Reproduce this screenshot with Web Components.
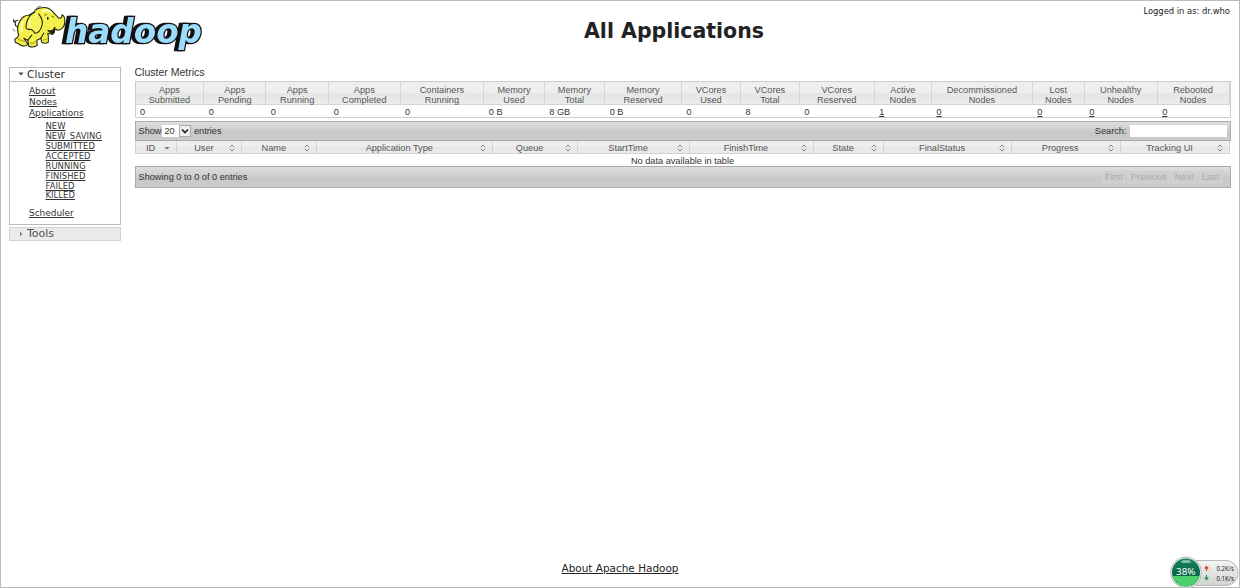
<!DOCTYPE html>
<html lang="en">
<head>
<meta charset="utf-8">
<title>All Applications</title>
<style>
html,body{margin:0;height:100%;background:#fff;overflow:hidden}
</style>
</head>
<body>
<yarn-page>
  <hadoop-logo slot="logo"></hadoop-logo>
  <span slot="title">All Applications</span>
  <span slot="user">Logged in as: dr.who</span>
  <side-nav slot="nav"></side-nav>
  <cluster-metrics slot="main">Cluster Metrics</cluster-metrics>
  <apps-table slot="main"></apps-table>
  <span slot="footer">About Apache Hadoop</span>
</yarn-page>
<net-gadget></net-gadget>
<script>
function define(name, html) {
  const t = document.createElement('template');
  t.innerHTML = html;
  customElements.define(name, class extends HTMLElement {
    constructor() {
      super();
      this.attachShadow({mode: 'open'}).append(t.content.cloneNode(true));
    }
  });
}

define('yarn-page', `
<style>
:host{display:flex;flex-direction:column;box-sizing:border-box;width:1240px;height:588px;border:1px solid #b9b9b9;font-family:"DejaVu Sans",sans-serif;color:#222;padding:0 9px 0 8px}
header{display:grid;grid-template-columns:200px 1fr 200px;height:66px;flex:none}
h1{margin:17px 0 0;font-size:20.5px;line-height:27px;text-align:center;font-weight:bold;padding-left:109px;white-space:nowrap}
.user{text-align:right;font-size:8.4px;line-height:12px;padding-top:4px}
.body{display:grid;grid-template-columns:111.500px 1096px;column-gap:14px;flex:1;align-items:start}
footer{height:28px;text-align:center;font-size:10.47px;line-height:18px;text-decoration:underline;padding-left:1px}
</style>
<header><div><slot name="logo"></slot></div><h1><slot name="title"></slot></h1><div class="user"><slot name="user"></slot></div></header>
<div class="body"><slot name="nav"></slot><main><slot name="main"></slot></main></div>
<footer><slot name="footer"></slot></footer>`);

define('hadoop-logo', `
<style>:host{display:block}svg{display:block;overflow:visible}text{filter:drop-shadow(-3px 0 0 #111)}</style>
<svg width="200" height="56" viewBox="9 1 200 56">
  <text x="65" y="43" font-family="DejaVu Sans" font-weight="bold" font-style="italic" font-size="34.5" stroke-linejoin="miter" textLength="137" lengthAdjust="spacingAndGlyphs" fill="#9bdcfc" stroke="#111" stroke-width="2.6" paint-order="stroke">hadoop</text>
  <g transform="translate(0.800 1.200)" stroke="#25250c" stroke-width="1.1" stroke-linejoin="round" stroke-linecap="round">
    <path d="M18 26Q14 26 14.500 21Q12 21 13 18.500M14 20L17 19" fill="none"/>
    <path d="M19 20Q22 14 28 14L33 11Q35 7 41 6.500Q47 5.500 51 9.500Q55 14 58 17Q62 17 61 13.500Q64 14 64 20Q64 27 58 29Q55 29 53.500 27Q55 32 51 33L47 32Q48 36 47.500 41Q44 43 41 41L40 37L36 39L36.500 44Q33 47 28 45L27 39L23 37Q25 40 27 43Q25 46 20 44L17 42Q14 42 14 38Q17 37 18 34Q15 27 19 20Z" fill="#f4f04a"/>
    <path d="M34 11Q27 14 25.500 23Q24 29 29 28Q32 28 34 32Q39 32 41 25Q43 19 38 13" fill="#f5f25a"/>
    <path d="M47 29Q52 31 54 26M40 37L43 32M27 39L31 34" fill="none"/>
    <path d="M48 30Q52 31 53.500 28L52 33Z" fill="#222"/>
    <path d="M42 10Q46 7 50 11" stroke="#fffcc0" stroke-width="2" fill="none"/>
    <path d="M22 21Q20 25 21 30M29 20Q28 24 30 25" stroke="#ffffa8" stroke-width="2.200" fill="none"/>
    <path d="M18 38Q20 40 23 40M30 42Q33 43 35 40M43 39L46 38" stroke="#c4bd25" stroke-width="1.800" fill="none"/>
    <ellipse cx="47" cy="17" rx=".8" ry="1.500" fill="#111" stroke="none"/>
    <path d="M44 14L46 13M51 15L53 16M35 8Q37 5 40 5M12 28L14 30" fill="none" stroke-width=".7"/>
  </g>
</svg>`);

define('side-nav', `
<style>
:host{display:block;color:#333}
.hd{box-sizing:border-box;height:14.5px;border:1px solid #bbb;font-size:10.7px;line-height:13px;display:flex;align-items:center;padding-left:8px;gap:3px}
.hd svg{width:6px;height:6px;flex:none}
.bd{border:1px solid #bbb;border-top:0;height:143.500px;box-sizing:border-box;padding:4.300px 0 0 19px;font-size:8.95px;line-height:11px}
ul{list-style:none;margin:0;padding:0}
li ul{padding:3px 0 6.700px 16.500px;font-size:8.4px;line-height:9.950px;letter-spacing:.08px}
a{text-decoration:underline;display:block;width:max-content}
.off{margin-top:1.500px;border-color:#d3d3d3;background:#ebebeb;color:#555;font-size:11px}
</style>
<div class="hd"><svg viewBox="0 0 6 6"><path d="M.5 1.500H5.500L3 4.500Z" fill="#444"/></svg>Cluster</div>
<div class="bd"><ul><li><a>About</a></li><li><a>Nodes</a></li><li><a>Applications</a>
<ul><li><a>NEW</a></li><li><a>NEW_SAVING</a></li><li><a>SUBMITTED</a></li><li><a>ACCEPTED</a></li><li><a>RUNNING</a></li><li><a>FINISHED</a></li><li><a>FAILED</a></li><li><a>KILLED</a></li></ul></li>
<li><a>Scheduler</a></li></ul></div>
<div class="hd off"><svg viewBox="0 0 6 6"><path d="M2 .800V5.200L4.500 3Z" fill="#777"/></svg>Tools</div>`);

const metrics = [
  ['Apps Submitted','0',69],['Apps Pending','0',62],['Apps Running','0',63],['Apps Completed','0',71.5],
  ['Containers Running','0',84],['Memory Used','0 B',60.500],['Memory Total','8 GB',60.500],['Memory Reserved','0 B',77],
  ['VCores Used','0',59],['VCores Total','8',59],['VCores Reserved','0',75],['Active Nodes','1',57.500,1],
  ['Decommissioned Nodes','0',101,1],['Lost Nodes','0',52,1],['Unhealthy Nodes','0',73,1],['Rebooted Nodes','0',72,1]];
define('cluster-metrics', `
<style>
:host{display:block;font-family:"Liberation Sans",Arial,sans-serif;color:#333;font-size:10.5px;line-height:12px;margin-top:-1px;height:55px}
.t{box-sizing:border-box;width:1096px;height:37px;margin-top:2.500px;border:1px solid #ccc;font-size:9.2px;display:grid;grid-template-columns:${metrics.map(m => m[2] + 'fr').join(' ')};grid-template-rows:23px 12px}
.h{background:linear-gradient(#eee 0 50%,#e5e5e5 50%,#ececec);border-right:1px solid #d5d5d5;border-bottom:1px solid #d5d5d5;box-sizing:border-box;text-align:center;color:#555;line-height:10px;padding-top:3px;white-space:nowrap;min-width:0}
.v{padding-left:4.500px;line-height:15px}
.l{text-decoration:underline}
</style>
<slot></slot>
<div class="t">${metrics.map(m => `<div class="h">${m[0].replace(' ', '<br>')}</div>`).join('')}${metrics.map(m => `<div class="v"><span class="${m[3] ? 'l' : ''}">${m[1]}</span></div>`).join('')}</div>`);

const cols = [['ID',42],['User',65],['Name',75],['Application Type',176],['Queue',85],['StartTime',112],['FinishTime',124],['State',70.500],['FinalStatus',127.500],['Progress',109],['Tracking UI',110]];
const sortBoth = '<svg viewBox="0 0 6 8"><path d="M.8 3.200L3 1L5.200 3.200M.8 4.900L3 7.100L5.200 4.900" fill="none" stroke="#777" stroke-width=".9"/></svg>';
const sortDown = '<svg viewBox="0 0 6 8"><path d="M.3 2.900H5.700L3 5.500Z" fill="#777"/></svg>';
define('apps-table', `
<style>
:host{display:block;width:1096px;font-family:"Liberation Sans",Arial,sans-serif;font-size:9.2px;color:#333}
.bar{box-sizing:border-box;border:1px solid #aaa;background:linear-gradient(#dedede,#c8c8c8 60%,#cbcbcb);display:flex;align-items:center;padding:0 3px}
.top{height:20px;line-height:13px}
.bot{height:22px;padding-right:7px}
.sel{display:flex;align-items:center;width:29px;height:12px;background:#fff;margin:0 2.500px 0 1px;box-sizing:border-box;padding-left:2px}
.sel i{margin-left:auto;width:10px;height:10px;border:1px solid #aaa;background:#eee;display:flex}
.sel svg{width:10px;height:10px}
.sp{flex:1}
.in{width:97px;height:12px;background:#fff;margin-left:3px}
.hr{display:grid;grid-template-columns:${cols.map(c => c[1] + 'fr').join(' ')};height:13px;line-height:12px;color:#555;border-left:1px solid #d3d3d3;box-sizing:border-box}
.c{display:flex;align-items:center;min-width:0;height:13px;box-sizing:border-box;border-right:1px solid #d3d3d3;border-bottom:1px solid #d3d3d3;background:linear-gradient(#eee 0 50%,#e6e6e6 50%,#ebebeb);padding-right:6px}
.c span{flex:1;text-align:center;margin-right:-1px;white-space:nowrap;padding-top:2px}
.c svg{width:6px;height:8px;flex:none;margin-top:1px}
.none{height:12px;line-height:14px;text-align:center}
.pg{display:flex;color:#a9a9a9;gap:1px;line-height:13px}
.pg span{padding:0 3.500px;background:#cfcfcf}
</style>
<div class="bar top">Show<span class="sel">20<i><svg viewBox="0 0 10 10"><path d="M2 3.500L5 6.500L8 3.500" fill="none" stroke="#222" stroke-width="1.700"/></svg></i></span>entries<span class="sp"></span>Search:<span class="in"></span></div>
<div class="hr">${cols.map((c, i) => `<div class="c"><span>${c[0]}</span>${i ? sortBoth : sortDown}</div>`).join('')}</div>
<div class="none">No data available in table</div>
<div class="bar bot">Showing 0 to 0 of 0 entries<span class="sp"></span><div class="pg"><span>First</span><span>Previous</span><span>Next</span><span>Last</span></div></div>`);

define('net-gadget', `
<style>
:host{position:absolute;left:1168px;top:554px;width:72px;height:34px;overflow:hidden}
svg{display:block}
</style>
<svg width="72" height="34" viewBox="1168 554 72 34" font-family="Noto Sans,sans-serif">
  <defs><linearGradient id="p" x2="0" y2="1"><stop stop-color="#f4f4f4"/><stop offset="1" stop-color="#d2d2d2"/></linearGradient>
  <linearGradient id="g" x2="0" y2="1"><stop stop-color="#168060"/><stop offset=".6" stop-color="#086747"/></linearGradient></defs>
  <rect x="1183" y="560.500" width="55" height="25" rx="12" fill="url(#p)" stroke="#bbb"/>
  <circle cx="1186" cy="572.500" r="15.500" fill="#eee" stroke="#aaa" stroke-width=".8"/>
  <circle cx="1186" cy="572.500" r="14" fill="url(#g)"/>
  <path d="M1172.500 576H1199.500A14 14 0 0 1 1172.500 576Z" fill="#4bd06a"/>
  <ellipse cx="1186" cy="561.500" rx="5" ry="1.600" fill="#b5e0ce" opacity=".7"/>
  <text x="1176" y="575.300" font-size="9" textLength="19.500" lengthAdjust="spacingAndGlyphs" fill="#fff">38%</text>
  <path d="M1206.500 571V566.500M1204.700 568.500L1206.500 566.500L1208.300 568.500" stroke="#e4422c" stroke-width="1.200" fill="none"/>
  <path d="M1206.500 575V579.500M1204.700 577.500L1206.500 579.500L1208.300 577.500" stroke="#25994c" stroke-width="1.200" fill="none"/>
  <g font-size="6.500" fill="#222"><text x="1216.500" y="571" textLength="17.500" lengthAdjust="spacingAndGlyphs">0.2K/s</text><text x="1216.500" y="580.500" textLength="17.500" lengthAdjust="spacingAndGlyphs">0.1K/s</text></g>
</svg>`);
</script>
</body>
</html>
